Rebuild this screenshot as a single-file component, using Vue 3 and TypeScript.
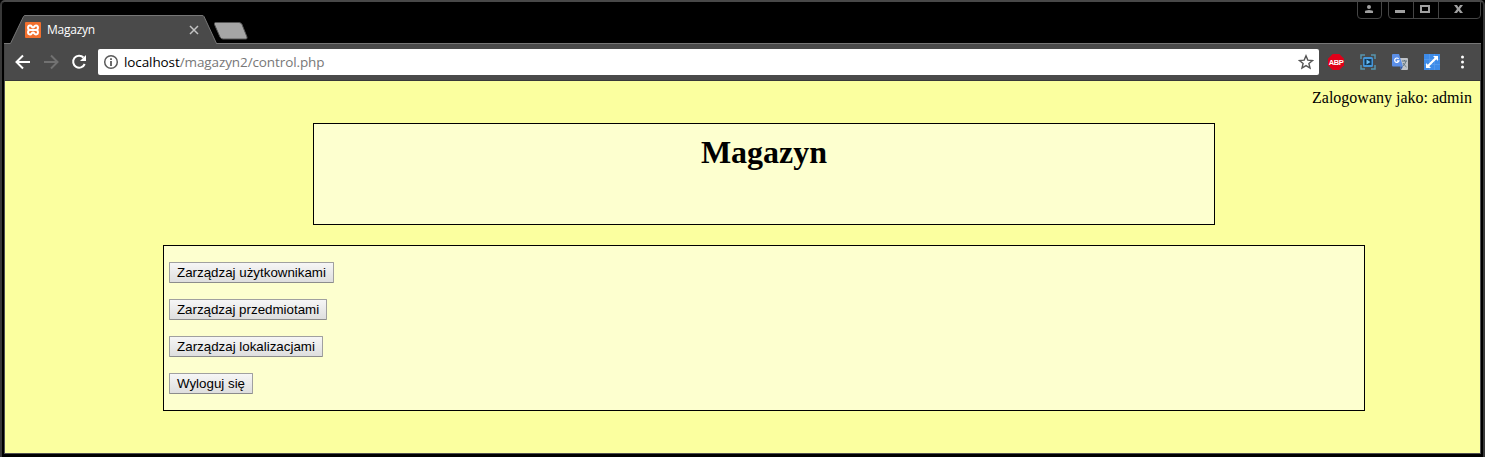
<script setup lang="ts">
interface MenuAction {
  label: string
  width: number
}

const actions: MenuAction[] = [
  { label: 'Zarządzaj użytkownikami', width: 165 },
  { label: 'Zarządzaj przedmiotami', width: 158 },
  { label: 'Zarządzaj lokalizacjami', width: 154 },
  { label: 'Wyloguj się', width: 84 },
]
</script>

<template>
  <div class="window">
    <div class="inner">
      <header class="tabstrip">
        <svg class="tabshape" width="240" height="29" viewBox="0 0 240 29">
          <path d="M0 28.5H6.5L19.5 1.5Q20 .5 21 .5H198Q199.500 .5 200 1.500L212.500 28.500V29H0Z" fill="#4a4a4a" />
          <path d="M0 28.500H6.500L19.500 1.500Q20 .5 21 .5H198Q199.500 .5 200 1.500L212.500 28.500H240" fill="none" stroke="#777" />
          <path d="M7 28.500H212" stroke="#4a4a4a" />
          <path d="M211.500 7.500H235Q237 7.500 238 9.500L243 22Q243.500 24 242 24H219Q217 24 216 22L210.500 9.500Q210 7.500 211.500 7.500Z" fill="#a5a5a5" stroke="#555" />
        </svg>
        <div class="tab">
          <svg class="favicon" width="16" height="16" viewBox="0 0 16 16">
            <rect width="16" height="16" rx="1" fill="#f3702e" />
            <path d="M5.200 8C2.500 8 2.200 3.800 5 3.600C7 3.500 6.500 5.500 8 5.500S9 3.500 11 3.600C13.800 3.800 13.500 8 10.800 8C13.500 8 13.800 12.200 11 12.400C9 12.500 9.500 10.500 8 10.500S7 12.500 5 12.400C2.200 12.200 2.500 8 5.200 8ZM5.200 8H10.800" fill="none" stroke="#fff" stroke-width="2" />
          </svg>
          <span class="tabtitle">Magazyn</span>
          <svg width="10" height="10" viewBox="0 0 10 10"><path d="M1 1L9 9M9 1L1 9" stroke="#c4c4c4" stroke-width="1.500" /></svg>
        </div>
        <svg class="controls" width="126" height="20" viewBox="0 0 126 20">
          <g fill="none" stroke="#454545">
            <path d="M.5 0V13Q.5 16.500 4 16.500H21Q24.500 16.500 24.500 13V0" />
            <path d="M31.500 0V13Q31.500 16.500 35 16.500H120Q123.500 16.500 123.500 13V0M56.500 0V16M81.500 0V16" />
          </g>
          <g fill="#a0a0a0">
            <circle cx="12" cy="5" r="2" />
            <path d="M8 11V9.500Q8 8 12 8T16 9.500V11Z" />
            <rect x="38" y="8" width="10" height="3" />
            <path fill-rule="evenodd" d="M63 3H73V11H63ZM65 5V9H71V5Z" />
            <path d="M97 3H100L101.500 5.500L103 3H106L103 7L106 11H103L101.500 8.800L100 11H97L100 7Z" />
          </g>
        </svg>
      </header>

      <nav class="toolbar">
        <svg class="navicons" width="84" height="20" viewBox="0 0 84 20" fill="none" stroke-width="2">
          <path d="M25 10H12M18 3.500L11.500 10L18 16.500" stroke="#fff" />
          <path d="M39 10H52M46 3.500L52.500 10L46 16.500" stroke="#717171" />
          <path d="M78.500 5.500A6 6 0 1 0 79.700 12" stroke="#fff" />
          <path d="M81 3V9H75Z" fill="#fff" />
        </svg>
        <div class="address">
          <svg class="info" width="16" height="16" viewBox="0 0 16 16">
            <circle cx="8" cy="8" r="6.300" fill="none" stroke="#5a5a5a" stroke-width="1.500" />
            <path d="M7.100 4.200H8.900V6H7.100ZM7.100 7H8.900V12H7.100Z" fill="#5a5a5a" />
          </svg>
          <span class="url"><span class="host">localhost</span>/magazyn2/control.php</span>
          <svg class="star" width="16" height="16" viewBox="0 0 16 16">
            <path d="M8 1.800L9.800 6.100L14.500 6.500L10.900 9.500L12 14.100L8 11.600L4 14.100L5.100 9.500L1.500 6.500L6.200 6.100Z" fill="none" stroke="#555" stroke-width="1.400" />
          </svg>
        </div>
        <div class="extensions">
          <svg class="blocker" width="16" height="16" viewBox="0 0 16 16">
            <path d="M4.700 0H11.300L16 4.700V11.300L11.300 16H4.700L0 11.300V4.700Z" fill="#df0019" />
            <text x="8" y="11" text-anchor="middle" class="abp">ABP</text>
          </svg>
          <svg width="16" height="16" viewBox="0 0 16 16">
            <path d="M1 5V1H5M11 1H15V5M15 11V15H11M5 15H1V11" fill="none" stroke="#5795ae" stroke-width="1.500" />
            <rect x="3" y="3" width="10" height="10" rx="1.500" fill="#4596d9" />
            <rect x="4.500" y="5" width="7" height="6" fill="#123958" />
            <path d="M6.500 5.500L10.500 8L6.500 10.500Z" fill="#69bcf3" />
          </svg>
          <svg width="16" height="16" viewBox="0 0 16 16">
            <path d="M6 4H15Q16 4 16 5V15Q16 16 15 16H9Z" fill="#bfc3c8" />
            <path d="M1 0H7L11 12.500H1Q0 12.500 0 11.500V1Q0 0 1 0Z" fill="#5b8fe8" />
            <path d="M8 12.500H11L9 16Z" fill="#315bab" />
            <path d="M6.600 4.800A2.200 2.200 0 1 0 7 6.800H5" fill="none" stroke="#fff" stroke-width="1.200" />
            <path d="M10 7H15M12.500 6V7M14 7Q13 11 10.800 12M11 9Q12 11 14.500 13" fill="none" stroke="#627783" stroke-width="1" />
          </svg>
          <svg width="16" height="16" viewBox="0 0 16 16">
            <rect width="16" height="16" fill="#3d8be8" />
            <path d="M5.500 0V16M10.500 0V16M0 5.500H16M0 10.500H16" stroke="#599cee" stroke-width=".7" />
            <path d="M9 2H14V7L12.300 5.300L5.300 12.300L7 14H2V9L3.700 10.700L10.700 3.700Z" fill="#fff" />
          </svg>
          <svg class="more" width="4" height="14" viewBox="0 0 4 14" fill="#fff">
            <circle cx="2.500" cy="2" r="1.500" /><circle cx="2.500" cy="7" r="1.500" /><circle cx="2.500" cy="12" r="1.500" />
          </svg>
        </div>
      </nav>

      <main class="page">
        <div class="login">Zalogowany jako: admin</div>
        <section class="banner"><h1>Magazyn</h1></section>
        <section class="menu">
          <button v-for="action in actions" :key="action.label" type="button" :style="{ width: action.width + 'px' }">{{ action.label }}</button>
        </section>
      </main>
    </div>
  </div>
</template>

<style>
body { margin: 0; background: #000; }
</style>

<style scoped>
* { box-sizing: border-box; }
svg { display: block; flex: none; }
.window {
  width: 1485px;
  height: 457px;
  overflow: hidden;
  background: #000;
  border-top: 2px solid #484848;
  border-left: 2px solid #383838;
  border-right: 2px solid #383838;
  border-radius: 5px 5px 0 0;
  padding: 0 2px 3px;
}
.inner { width: 1477px; height: 452px; display: flex; flex-direction: column; }
.tabstrip {
  position: relative;
  height: 42px;
  flex: none;
  background: linear-gradient(#777, #777) 212px 41px / 1265px 1px no-repeat, #000;
}
.tabshape { position: absolute; left: 0; bottom: 0; overflow: visible; }
.tab { position: relative; display: flex; align-items: center; width: 195px; margin-left: 21px; padding-top: 20px; }
.tabtitle {
  flex: 1;
  margin-left: 6px;
  font: 12px/16px "Open Sans", "Noto Sans", sans-serif;
  letter-spacing: -.25px;
  color: #fff;
}
.tab > svg:last-child { margin-right: 21px; }
.controls { position: absolute; right: -2px; top: 0; }
.toolbar {
  flex: none;
  display: flex;
  align-items: center;
  height: 37px;
  background: #4a4a4a;
  border-left: 1px solid #444;
  border-bottom: 1px solid #383838;
}
.address {
  display: flex;
  align-items: center;
  width: 1221px;
  height: 26px;
  margin-left: 9px;
  padding: 0 5px;
  background: #fff;
  border-radius: 2px;
}
.url {
  flex: 1;
  margin-left: 5px;
  font: 13.500px/20px "Open Sans", "Noto Sans", sans-serif;
  letter-spacing: -.1px;
  color: #777;
}
.host { color: #000; }
.extensions { display: flex; align-items: center; gap: 16px; margin-left: 9px; }
.more { margin-left: 4px; }
.blocker { overflow: visible; }
.abp { font: bold 7.500px "Liberation Sans", Arial, sans-serif; letter-spacing: -.4px; fill: #fff; }
.page {
  flex: none;
  height: 373px;
  background: #fbff9f;
  border: 1px solid #505050;
  border-top: 0;
  font-family: "Liberation Serif", "Times New Roman", serif;
  font-size: 16px;
  color: #000;
}
.login { padding: 8px 8px 0; height: 42px; line-height: 18px; text-align: right; }
.banner {
  width: 902px;
  height: 102px;
  margin: 0 auto 20px 308px;
  background: #fdffcf;
  border: 1px solid #000;
}
h1 { margin: 10px 0 0; font-size: 32px; line-height: 37px; text-align: center; }
.menu {
  display: flex;
  flex-direction: column;
  align-items: flex-start;
  gap: 16px;
  width: 1202px;
  height: 166px;
  margin-left: 158px;
  padding: 16px 5px;
  background: #fdffcf;
  border: 1px solid #000;
}
button {
  height: 21px;
  padding: 0;
  font: 13.333px/17px "Liberation Sans", Arial, sans-serif;
  color: #000;
  white-space: nowrap;
  background: linear-gradient(#f6f6f6, #dedede);
  border: 1px solid #a0a0a0;
  border-bottom-color: #8c8c8c;
  border-radius: 1px;
}
</style>
